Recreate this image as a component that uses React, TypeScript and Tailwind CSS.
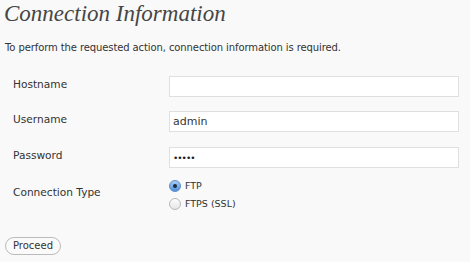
import React from 'react'

const sans = { fontFamily: '"DejaVu Sans", "Liberation Sans", sans-serif' }

const Field = ({ label, children }: { label: string; children: React.ReactNode }) => (
  <div className="flex items-center h-[35.5px]">
    <div className="w-[164px] pl-[8px] text-[10.6px] text-[#333]">{label}</div>
    <div className="flex-1">{children}</div>
  </div>
)

export default function App() {
  return (
    <div className="w-[470px] h-[262px] bg-[#f9f9f9] text-[#333] overflow-hidden" style={sans}>
      <h2
        className="pl-[4px] pt-[1px] text-[23px] italic text-[#464646] leading-[26px]"
        style={{ fontFamily: '"Liberation Serif", "DejaVu Serif", serif' }}
      >
        Connection Information
      </h2>
      <p className="pl-[5px] mt-[14px] text-[10px] tracking-[-0.1px] leading-[14px]">
        To perform the requested action, connection information is required.
      </p>
      <div className="mt-[12px] pl-[5px] pr-[11px]">
        <Field label="Hostname">
          <input className="w-full h-[21px] bg-white border border-[#dfdfdf] px-[2px] text-[11px] outline-none" />
        </Field>
        <Field label="Username">
          <input
            defaultValue="admin"
            className="w-full h-[21px] bg-white border border-[#dfdfdf] px-[3px] text-[11px] text-[#333] outline-none"
            style={sans}
          />
        </Field>
        <Field label="Password">
          <input
            type="password"
            defaultValue="admin"
            className="w-full h-[21px] bg-white border border-[#dfdfdf] px-[3px] text-[9px] tracking-[-1px] text-[#222] outline-none"
            style={sans}
          />
        </Field>
        <div className="flex items-start pt-[5px]">
          <div className="w-[164px] pl-[8px] text-[10.6px] pt-[6px]">Connection Type</div>
          <div className="flex flex-col gap-[4px] text-[9.5px] text-[#333]">
            <label className="flex items-center gap-[4px]">
              <span className="w-[12px] h-[12px] rounded-full border border-[#5a8dcc] bg-gradient-to-b from-[#a9cdf5] to-[#4f8fdc] flex items-center justify-center">
                <span className="w-[4px] h-[4px] rounded-full bg-[#1d2a3a]" />
              </span>
              FTP
            </label>
            <label className="flex items-center gap-[4px]">
              <span className="w-[12px] h-[12px] rounded-full border border-[#b9b9b9] bg-gradient-to-b from-[#fdfdfd] to-[#e6e6e6]" />
              FTPS (SSL)
            </label>
          </div>
        </div>
        <div className="mt-[21px]">
          <button className="h-[18px] w-[56px] rounded-full border border-[#bbb] bg-[#fafafa] text-[10px] text-[#333] leading-none">
            Proceed
          </button>
        </div>
      </div>
    </div>
  )
}
